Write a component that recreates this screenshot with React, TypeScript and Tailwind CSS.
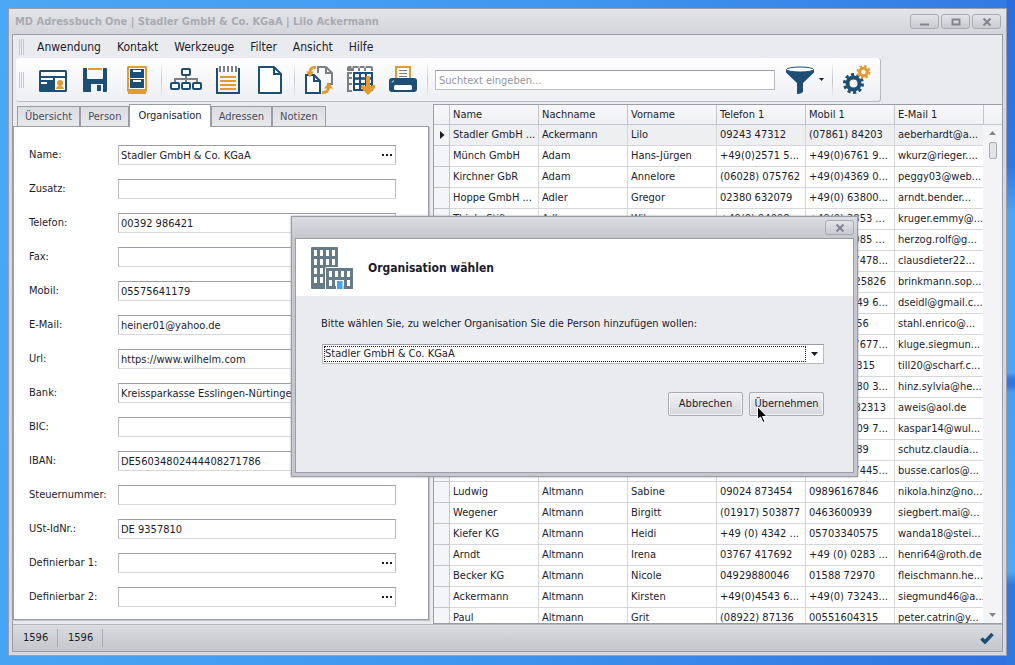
import { useState } from "react";
import type { ReactNode } from "react";

const NAVY = "#1d4f76";
const ORANGE = "#e39a33";
const GRAY = "#7b8085";

const MENU = ["Anwendung", "Kontakt", "Werkzeuge", "Filter", "Ansicht", "Hilfe"];
const TABS = ["Übersicht", "Person", "Organisation", "Adressen", "Notizen"];
const COLUMNS = ["Name", "Nachname", "Vorname", "Telefon 1", "Mobil 1", "E-Mail 1"];

type Field = { id: string; label: string; value: string; more?: boolean };

const FIELDS: Field[] = [
  { id: "name", label: "Name:", value: "Stadler GmbH & Co. KGaA", more: true },
  { id: "zusatz", label: "Zusatz:", value: "" },
  { id: "telefon", label: "Telefon:", value: "00392 986421" },
  { id: "fax", label: "Fax:", value: "" },
  { id: "mobil", label: "Mobil:", value: "05575641179" },
  { id: "email", label: "E-Mail:", value: "heiner01@yahoo.de" },
  { id: "url", label: "Url:", value: "https://www.wilhelm.com" },
  { id: "bank", label: "Bank:", value: "Kreissparkasse Esslingen-Nürtingen" },
  { id: "bic", label: "BIC:", value: "" },
  { id: "iban", label: "IBAN:", value: "DE56034802444408271786" },
  { id: "steuer", label: "Steuernummer:", value: "" },
  { id: "ust", label: "USt-IdNr.:", value: "DE 9357810" },
  { id: "def1", label: "Definierbar 1:", value: "", more: true },
  { id: "def2", label: "Definierbar 2:", value: "", more: true },
];

const ROWS = [
  ["Stadler GmbH ...", "Ackermann", "Lilo", "09243 47312", "(07861) 84203", "aeberhardt@a..."],
  ["Münch GmbH", "Adam", "Hans-Jürgen", "+49(0)2571 5...", "+49(0)6761 9...", "wkurz@rieger...."],
  ["Kirchner GbR", "Adam", "Annelore", "(06028) 075762", "+49(0)4369 0...", "peggy03@web..."],
  ["Hoppe GmbH ...", "Adler", "Gregor", "02380 632079", "+49(0) 63800...", "arndt.bender..."],
  ["Thiele Stift...", "Adler", "Wilma", "+49(0) 94098", "+49(0) 2853 ...", "kruger.emmy@..."],
  ["", "", "", "", "+49(0) 3085 ...", "herzog.rolf@g..."],
  ["", "", "", "", "+49(0) 37478...", "clausdieter22..."],
  ["", "", "", "", "(043 21) 25826", "brinkmann.sop..."],
  ["", "", "", "", "+49(0)3149 6...", "dseidl@gmail.c..."],
  ["", "", "", "", "0712 34356", "stahl.enrico@..."],
  ["", "", "", "", "+49(0) 27677...", "kluge.siegmun..."],
  ["", "", "", "", "04987 12315", "till20@scharf.c..."],
  ["", "", "", "", "+49(0)4180 3...", "hinz.sylvia@he..."],
  ["", "", "", "", "(071 45) 82313", "aweis@aol.de"],
  ["", "", "", "", "+49(0)2109 7...", "kaspar14@wul..."],
  ["", "", "", "", "0812 45689", "schutz.claudia..."],
  ["", "", "", "", "+49(0) 57445...", "busse.carlos@..."],
  ["Ludwig", "Altmann", "Sabine", "09024 873454", "09896167846", "nikola.hinz@no..."],
  ["Wegener", "Altmann", "Birgitt", "(01917) 503877", "0463600939", "siegbert.mai@..."],
  ["Kiefer KG", "Altmann", "Heidi", "+49 (0) 4342 ...", "05703340575", "wanda18@stei..."],
  ["Arndt", "Altmann", "Irena", "03767 417692", "+49 (0) 0283 ...", "henri64@roth.de"],
  ["Becker KG", "Altmann", "Nicole", "04929880046", "01588 72970", "fleischmann.he..."],
  ["Ackermann", "Altmann", "Kirsten", "+49(0)4543 6...", "+49(0) 73243...", "siegmund46@a..."],
  ["Paul", "Altmann", "Grit", "(08922) 87136", "00551604315", "peter.catrin@y..."],
];

function CardIcon() {
  return (
    <svg width="28" height="28" viewBox="0 0 28 28">
      <rect y="4" width="28" height="22" rx="1.500" fill={NAVY} />
      <path d="M2 6h24v4H2zM2 12h12v2H2zM2 16h6v2H2z" fill="#fff" />
      <path d="M16 12h10v12H16z" fill="#fff" />
      <circle cx="21" cy="17" r="3" fill={ORANGE} />
      <path d="M17 23c0-2 1.500-3 4-3s4 1 4 3z" fill={ORANGE} />
    </svg>
  );
}

function SaveIcon() {
  return (
    <svg width="28" height="28" viewBox="0 0 28 28">
      <path
        d="M2 3a1 1 0 0 1 1-1h3v10a1 1 0 0 0 1 1h14a1 1 0 0 0 1-1V2h3a1 1 0 0 1 1 1v22a1 1 0 0 1-1 1h-3v-8H10v8H3a1 1 0 0 1-1-1z"
        fill={NAVY}
      />
      <path d="M7 2h14v2H7z" fill={ORANGE} />
      <path d="M16 19h4v6h-4z" fill={NAVY} />
    </svg>
  );
}

function CabinetIcon() {
  return (
    <svg width="28" height="28" viewBox="0 0 28 28">
      <path d="M5 0h18l1 1v24l-1 1v2H5v-2l-1-1V1z" fill={ORANGE} />
      <path d="M6 2h16v21H6z" fill="#fff" />
      <path d="M7 3h14v9H7zM7 13h14v9H7z" fill={NAVY} />
      <path d="M10 4h8v2h-8zM10 14h8v2h-8z" fill="#fff" />
    </svg>
  );
}

function TreeIcon() {
  return (
    <svg width="32" height="28" viewBox="0 0 32 28">
      <path d="M16 9v8M5 16v-3h22v3" fill="none" stroke={GRAY} strokeWidth="2" />
      <g fill="#fff" stroke={NAVY} strokeWidth="2">
        <rect x="12" y="3" width="8" height="6" rx="1" />
        <rect x="1" y="17" width="8" height="6" rx="1" />
        <rect x="12" y="17" width="8" height="6" rx="1" />
        <rect x="23" y="17" width="8" height="6" rx="1" />
      </g>
    </svg>
  );
}

function NotesIcon() {
  return (
    <svg width="28" height="28" viewBox="0 0 28 28">
      <path d="M4 3H3v24h22V3h-1" fill="none" stroke={NAVY} strokeWidth="2" />
      <path d="M6 0v6M10 0v6M14 0v6M18 0v6M22 0v6" stroke={GRAY} strokeWidth="2" />
      <path d="M6 11h16M6 15h16M6 19h16M6 23h16" stroke={ORANGE} strokeWidth="2" />
    </svg>
  );
}

function PageIcon() {
  return (
    <svg width="28" height="28" viewBox="0 0 28 28">
      <path d="M3 1h15l7 7v19H3z" fill="#fff" stroke={NAVY} strokeWidth="2" strokeLinejoin="round" />
      <path d="M18 1v7h7" fill="none" stroke={NAVY} strokeWidth="2" />
    </svg>
  );
}

function ConvertIcon() {
  return (
    <svg width="28" height="28" viewBox="0 0 28 28">
      <path d="M13 7V1h8l6 6v11h-5M21 1v6h6" fill="none" stroke={GRAY} strokeWidth="2" />
      <path d="M1 9h8l6 6v12H1zM9 9v6h6" fill="#fff" stroke={NAVY} strokeWidth="2" />
      <path d="M11 1.500C7 1 5 3 5 6" fill="none" stroke={ORANGE} strokeWidth="3" />
      <path d="M1 5.500h8l-4 6z" fill={ORANGE} />
      <path d="M17 26.500c4 .5 6.500-1.500 6.500-5" fill="none" stroke={ORANGE} strokeWidth="3" />
      <path d="M19 22.500h9l-4.500-6z" fill={ORANGE} />
    </svg>
  );
}

function TableExportIcon() {
  return (
    <svg width="28" height="30" viewBox="0 0 28 30">
      <path d="M0 3a2 2 0 0 1 2-2h22a2 2 0 0 1 2 2v3H0z" fill={GRAY} />
      <path d="M7 3h4v3H7zM13 3h4v3h-4zM19 3h5v3h-5z" fill="#fff" />
      <path d="M5 1v2M12 1v2M18 1v2" stroke="#fff" />
      <path d="M5 8H1v5h4M1 13v6h4M1 19v7h4" fill="none" stroke={GRAY} strokeWidth="2" />
      <path d="M7 8h18v17H7zM13 8v17M19 8v17M7 13.500h18M7 19h18" fill="#fff" stroke={NAVY} strokeWidth="2" />
      <path d="M13 8v17M19 8v17M7 13.500h18M7 19h18" stroke={NAVY} strokeWidth="2" />
      <path d="M19 11h4v10h1.500l1-1H28v3l-7 7-7-7v-3h2.500l1 1H19z" fill={ORANGE} />
    </svg>
  );
}

function PrintIcon() {
  return (
    <svg width="28" height="28" viewBox="0 0 28 28">
      <path d="M7 13V1h14v12" fill="#fff" stroke={ORANGE} strokeWidth="2" />
      <path d="M10 4.500h8M10 7.500h8M10 10.500h8" stroke={GRAY} />
      <rect y="12" width="28" height="14" rx="3" fill={NAVY} />
      <path d="M3 16.500c0-1 1-1.500 2-1.500" stroke="#fff" fill="none" />
      <rect x="5" y="19" width="18" height="5" rx="1.500" fill="#fff" />
    </svg>
  );
}

function FunnelIcon() {
  return (
    <svg width="28" height="28" viewBox="0 0 28 28">
      <path d="M0 3.500h28v3L17 17v8.500c0 1-3 2.500-6 2.500V17L0 6.500z" fill={NAVY} />
      <ellipse cx="14" cy="3.500" rx="13.500" ry="2.500" fill="#fff" stroke={NAVY} />
    </svg>
  );
}

function GearsIcon() {
  return (
    <svg width="28" height="30" viewBox="0 0 28 30">
      <g fill="none" stroke={NAVY}>
        <circle cx="10.500" cy="18.500" r="6" strokeWidth="4" />
        <circle cx="10.500" cy="18.500" r="9" strokeWidth="3" strokeDasharray="3.100 2.555" />
      </g>
      <g fill="none" stroke={ORANGE}>
        <circle cx="20.500" cy="7" r="3.800" strokeWidth="3" />
        <circle cx="20.500" cy="7" r="6" strokeWidth="2" strokeDasharray="2.400 2.312" />
      </g>
    </svg>
  );
}

function BuildingIcon() {
  const cols = [0, 6, 12, 18];
  return (
    <svg width="42" height="42" viewBox="0 0 42 42" className="shrink-0">
      <rect width="27" height="42" rx="1" fill="#657b8a" />
      {[3, 12, 21, 30].map((y) =>
        cols.map((x) => <rect key={`${x}-${y}`} x={x + 3} y={y} width="3" height="6" fill="#fff" />),
      )}
      <rect x="14.500" y="20.500" width="28" height="23" rx="1" fill="#657b8a" stroke="#fff" />
      {[24, 33].map((y) =>
        cols.map((x) => <rect key={`${x}-${y}`} x={x + 18} y={y} width="3" height="6" fill="#fff" />),
      )}
      <path d="M25.500 33.500h6.500V43h-6.500z" fill="#42a5f5" stroke="#fff" />
    </svg>
  );
}

function ToolButton({ label, children }: { label: string; children: ReactNode }) {
  return (
    <button type="button" aria-label={label} className="flex h-10 w-[42px] items-center justify-center">
      {children}
    </button>
  );
}

function Separator() {
  return <div className="mx-[3px] h-9 w-px bg-linear-to-b from-transparent via-[#c4c5cc] to-transparent" />;
}

function Grip() {
  return (
    <div className="flex h-4 gap-px">
      <div className="w-px bg-[#c8c9d0]" />
      <div className="w-px bg-[#c8c9d0]" />
      <div className="w-px bg-[#c8c9d0]" />
    </div>
  );
}

function CaptionButton({ label, children }: { label: string; children: ReactNode }) {
  return (
    <button
      type="button"
      aria-label={label}
      className="flex h-[15px] w-[29px] items-center justify-center rounded-[3px] border border-[#a9aab3] bg-linear-to-b from-[#e3e4e8] to-[#c9cad0]"
    >
      <svg width="10" height="8" viewBox="0 0 10 8" fill="none" stroke="#82838f" strokeWidth="2">
        {children}
      </svg>
    </button>
  );
}

function MenuBar() {
  return (
    <div className="flex h-[23px] shrink-0 items-center pl-[6px]">
      <Grip />
      <nav className="flex items-center pl-[5px]">
        {MENU.map((m) => (
          <button key={m} type="button" className="px-[8px] text-[12px] leading-4">
            {m}
          </button>
        ))}
      </nav>
    </div>
  );
}

function Toolbar() {
  return (
    <div className="ml-[3px] flex h-11 shrink-0 items-center self-start rounded-[3px] border-r border-b border-[#b9bac2] bg-linear-to-b from-white to-[#eeeff3] pr-[2px] pl-[3px]">
      <Grip />
      <div className="flex items-center pl-2">
        <ToolButton label="Visitenkarte"><CardIcon /></ToolButton>
        <ToolButton label="Speichern"><SaveIcon /></ToolButton>
        <ToolButton label="Archiv"><CabinetIcon /></ToolButton>
        <Separator />
        <ToolButton label="Struktur"><TreeIcon /></ToolButton>
        <ToolButton label="Notizen"><NotesIcon /></ToolButton>
        <ToolButton label="Neu"><PageIcon /></ToolButton>
        <Separator />
        <ToolButton label="Übertragen"><ConvertIcon /></ToolButton>
        <ToolButton label="Export"><TableExportIcon /></ToolButton>
        <ToolButton label="Drucken"><PrintIcon /></ToolButton>
        <Separator />
        <input
          aria-label="Suchtext"
          placeholder="Suchtext eingeben..."
          className="mr-1 ml-1 h-5 w-[340px] border border-[#b9bac2] border-t-[#9b9ca8] bg-white px-[3px] pt-px outline-none placeholder:text-[#9495a0]"
        />
        <ToolButton label="Filter"><FunnelIcon /></ToolButton>
        <svg width="12" height="4" viewBox="0 0 12 4" className="-ml-1">
          <path d="M2 0h5L4.500 3z" fill="#1c1c2c" />
        </svg>
        <Separator />
        <ToolButton label="Einstellungen"><GearsIcon /></ToolButton>
      </div>
    </div>
  );
}

function FormPanel() {
  const [active, setActive] = useState("Organisation");
  return (
    <section className="mb-[4px] flex w-[416px] shrink-0 flex-col">
      <div role="tablist" className="flex h-[22px] shrink-0 items-end pl-1">
        {TABS.map((t) =>
          t === active ? (
            <button
              key={t}
              type="button"
              role="tab"
              aria-selected
              className="relative z-10 -mb-px h-[23px] border border-b-0 border-[#9b9ca8] bg-white px-2"
            >
              {t}
            </button>
          ) : (
            <button
              key={t}
              type="button"
              role="tab"
              aria-selected={false}
              onClick={() => setActive(t)}
              className="h-5 border border-b-0 border-[#9b9ca8] bg-linear-to-b from-[#dcdde1] to-[#e8e9ec] px-[7px] pt-px text-[#4b4b5c]"
            >
              {t}
            </button>
          ),
        )}
      </div>
      <form className="flex min-h-0 flex-1 flex-col gap-[14px] overflow-hidden border border-[#9b9ca8] bg-white pt-[18px] pr-8 pl-[15px] shadow-[1px_1px_1px_#c4c5cc]">
        {FIELDS.map((f) => (
          <div key={f.id} className="flex h-5 shrink-0 items-center">
            <label htmlFor={f.id} className="w-[89px] shrink-0 pt-px">
              {f.label}
            </label>
            <div className="flex h-5 flex-1 items-center border border-[#b9bac2] border-t-[#9b9ca8] border-b-[#d6d7dd] bg-white">
              <input id={f.id} defaultValue={f.value} className="h-full min-w-0 flex-1 pl-[2px] outline-none" />
              {f.more && (
                <button type="button" aria-label="Auswählen" className="flex gap-[2px] pr-[3px]">
                  <span className="size-[2px] bg-[#1c1c2c]" />
                  <span className="size-[2px] bg-[#1c1c2c]" />
                  <span className="size-[2px] bg-[#1c1c2c]" />
                </button>
              )}
            </div>
          </div>
        ))}
      </form>
    </section>
  );
}

function ContactGrid() {
  return (
    <section className="relative min-w-0 flex-1 overflow-hidden border-t border-b border-l border-[#9b9ca8] bg-white">
      <table className="w-full table-fixed border-separate border-spacing-0 text-left whitespace-nowrap">
        <colgroup>
          <col className="w-4" />
          {COLUMNS.map((c) => (
            <col key={c} className="w-[89px]" />
          ))}
          <col />
        </colgroup>
        <thead>
          <tr className="h-5 bg-linear-to-b from-[#f8f8fa] to-[#eff0f3]">
            <th className="border-r border-b border-[#c3c4cc] p-0" />
            {COLUMNS.map((c) => (
              <th key={c} className="overflow-hidden border-r border-b border-[#c3c4cc] px-[3px] pt-px pb-0 font-normal">
                {c}
              </th>
            ))}
            <th className="border-b border-[#c3c4cc] p-0" />
          </tr>
        </thead>
        <tbody>
          {ROWS.map((row, i) => (
            <tr key={i} className={i === 0 ? "h-[21px] bg-[#edeff1]" : "h-[21px]"}>
              <td className="border-r border-b border-[#c3c4cc] bg-[#f4f5f7] p-0">
                {i === 0 && (
                  <svg width="5" height="8" viewBox="0 0 5 8" className="ml-[6px]">
                    <path d="M0 0l4.500 4L0 8z" fill="#1c1c2c" />
                  </svg>
                )}
              </td>
              {row.map((cell, c) => (
                <td key={c} className="overflow-hidden border-r border-b border-[#d6d7dd] px-[3px] pt-px pb-0">
                  {cell}
                </td>
              ))}
              <td className="bg-[#f4f4f7] p-0" />
            </tr>
          ))}
        </tbody>
      </table>
      <div className="absolute top-[20px] right-0 bottom-0 flex w-[19px] flex-col items-center bg-[#f4f4f7] py-[6px]">
        <svg width="7" height="4" viewBox="0 0 7 4">
          <path d="M0 4h7L3.500 0z" fill="#82838f" />
        </svg>
        <div className="mt-[7px] h-[17px] w-2 rounded-[2px] border border-[#a9aab3] bg-[#e3e4e8]" />
        <svg width="7" height="4" viewBox="0 0 7 4" className="mt-auto">
          <path d="M0 0h7L3.500 4z" fill="#82838f" />
        </svg>
      </div>
    </section>
  );
}

function StatusBar() {
  return (
    <footer className="flex h-[27px] shrink-0 items-center border-t border-[#b3b4bd] bg-linear-to-b from-[#dadbdf] to-[#c5c6cc] pr-2">
      <span className="w-11 pl-[10px]">1596</span>
      <div className="h-[18px] w-px bg-[#a9aab3]" />
      <span className="w-11 pl-[10px]">1596</span>
      <div className="h-[18px] w-px bg-[#a9aab3]" />
      <svg width="14" height="12" viewBox="0 0 14 12" className="ml-auto">
        <path d="M1.500 6.500l3.500 3.500 7.500-8" fill="none" stroke={NAVY} strokeWidth="3.500" />
      </svg>
    </footer>
  );
}

const dialogButton =
  "h-6 w-[75px] rounded-[2px] border border-[#a9aab3] bg-linear-to-b from-[#f1f1f4] to-[#d7d8dd] pt-px shadow-[inset_0_0_0_1px_#f4f4f7]";

function OrganisationDialog() {
  return (
    <div
      role="dialog"
      aria-labelledby="dlg-title"
      className="absolute top-[216px] left-[291px] z-20 flex h-[261px] w-[567px] flex-col border border-[#9b9ca8] bg-[#c6c7ce] px-[3px] pb-[3px] shadow-[0_0_2px_#9b9ca8]"
    >
      <div className="-mx-[3px] flex h-[21px] shrink-0 items-center justify-end bg-linear-to-b from-[#dcdde1] to-[#c6c7ce] pr-[3px]">
        <CaptionButton label="Schließen">
          <path d="M1.500 .5l7 7M8.500 .5l-7 7" />
        </CaptionButton>
      </div>
      <div className="flex min-h-0 flex-1 flex-col border border-[#9b9ca8] bg-[#eaebef]">
        <header className="flex h-[57px] items-center gap-[15px] bg-white pl-[15px]">
          <BuildingIcon />
          <h2 id="dlg-title" className="text-[12px] font-bold">
            Organisation wählen
          </h2>
        </header>
        <div className="flex flex-col pt-5 pr-[29px] pl-[25px]">
          <label htmlFor="org" className="leading-4">
            Bitte wählen Sie, zu welcher Organisation Sie die Person hinzufügen wollen:
          </label>
          <div className="mt-3 ml-px flex h-5 items-center border border-[#b9bac2] border-t-[#9b9ca8] bg-white">
            <select
              id="org"
              className="ml-px h-4 flex-1 appearance-none border border-dotted border-[#1c1c2c] bg-white leading-3 outline-none"
            >
              <option>Stadler GmbH &amp; Co. KGaA</option>
            </select>
            <svg width="17" height="4" viewBox="0 0 17 4">
              <path d="M5 0h7L8.500 4z" fill="#1c1c2c" />
            </svg>
          </div>
          <div className="mt-7 flex justify-end gap-[6px]">
            <button type="button" className={dialogButton}>Abbrechen</button>
            <button type="button" className={dialogButton}>Übernehmen</button>
          </div>
        </div>
      </div>
    </div>
  );
}

export default function App() {
  return (
    <div className="relative h-screen overflow-hidden bg-[linear-gradient(100deg,#4aa8f4,#3f97ef_50%,#2f72e0)] pt-2 pr-2 pb-[9px] pl-2 font-['DejaVu_Sans_Condensed','Noto_Sans',sans-serif] text-[11px] text-[#1c1c2c]">
      <div className="absolute top-0 right-0 h-full w-2 bg-[linear-gradient(#2b6de0,#2f78e4_25%,#4ea5f6_32%,#4ea5f6_56%,#2f78e0_57%,#2f78e0_58%,#4a9ef2_59%,#4ea8f5_86%,#2f78dd_88%)]" />
      <div className="relative flex h-full flex-col border border-[#9b9ca8] bg-[#d8d9de]">
        <header className="flex h-[25px] shrink-0 items-center bg-linear-to-b from-[#e4e5e9] to-[#d4d5da] pr-[5px] pl-[6px]">
          <h1 className="flex-1 pt-px text-[11px] font-bold text-[#a9aab3]">
            MD Adressbuch One | Stadler GmbH &amp; Co. KGaA | Lilo Ackermann
          </h1>
          <div className="flex gap-[2px]">
            <CaptionButton label="Minimieren">
              <path d="M0 6.500h9" />
            </CaptionButton>
            <CaptionButton label="Maximieren">
              <path d="M1.500 1.500h7v5h-7z" />
            </CaptionButton>
            <CaptionButton label="Schließen">
              <path d="M1.500 .5l7 7M8.500 .5l-7 7" />
            </CaptionButton>
          </div>
        </header>
        <div className="mx-[3px] mb-[3px] flex min-h-0 flex-1 flex-col border border-[#9b9ca8] bg-[#eaebef]">
          <MenuBar />
          <Toolbar />
          <main className="mt-[2px] flex min-h-0 flex-1 gap-1">
            <FormPanel />
            <ContactGrid />
          </main>
          <StatusBar />
        </div>
      </div>
      <OrganisationDialog />
      <svg width="12" height="18" viewBox="0 0 12 18" className="absolute top-[406px] left-[757px] z-30">
        <path d="M.5 .5v13l3-2.500 2.500 5.500 2-1-2.500-5h4.500z" fill="#000" stroke="#fff" />
      </svg>
    </div>
  );
}
